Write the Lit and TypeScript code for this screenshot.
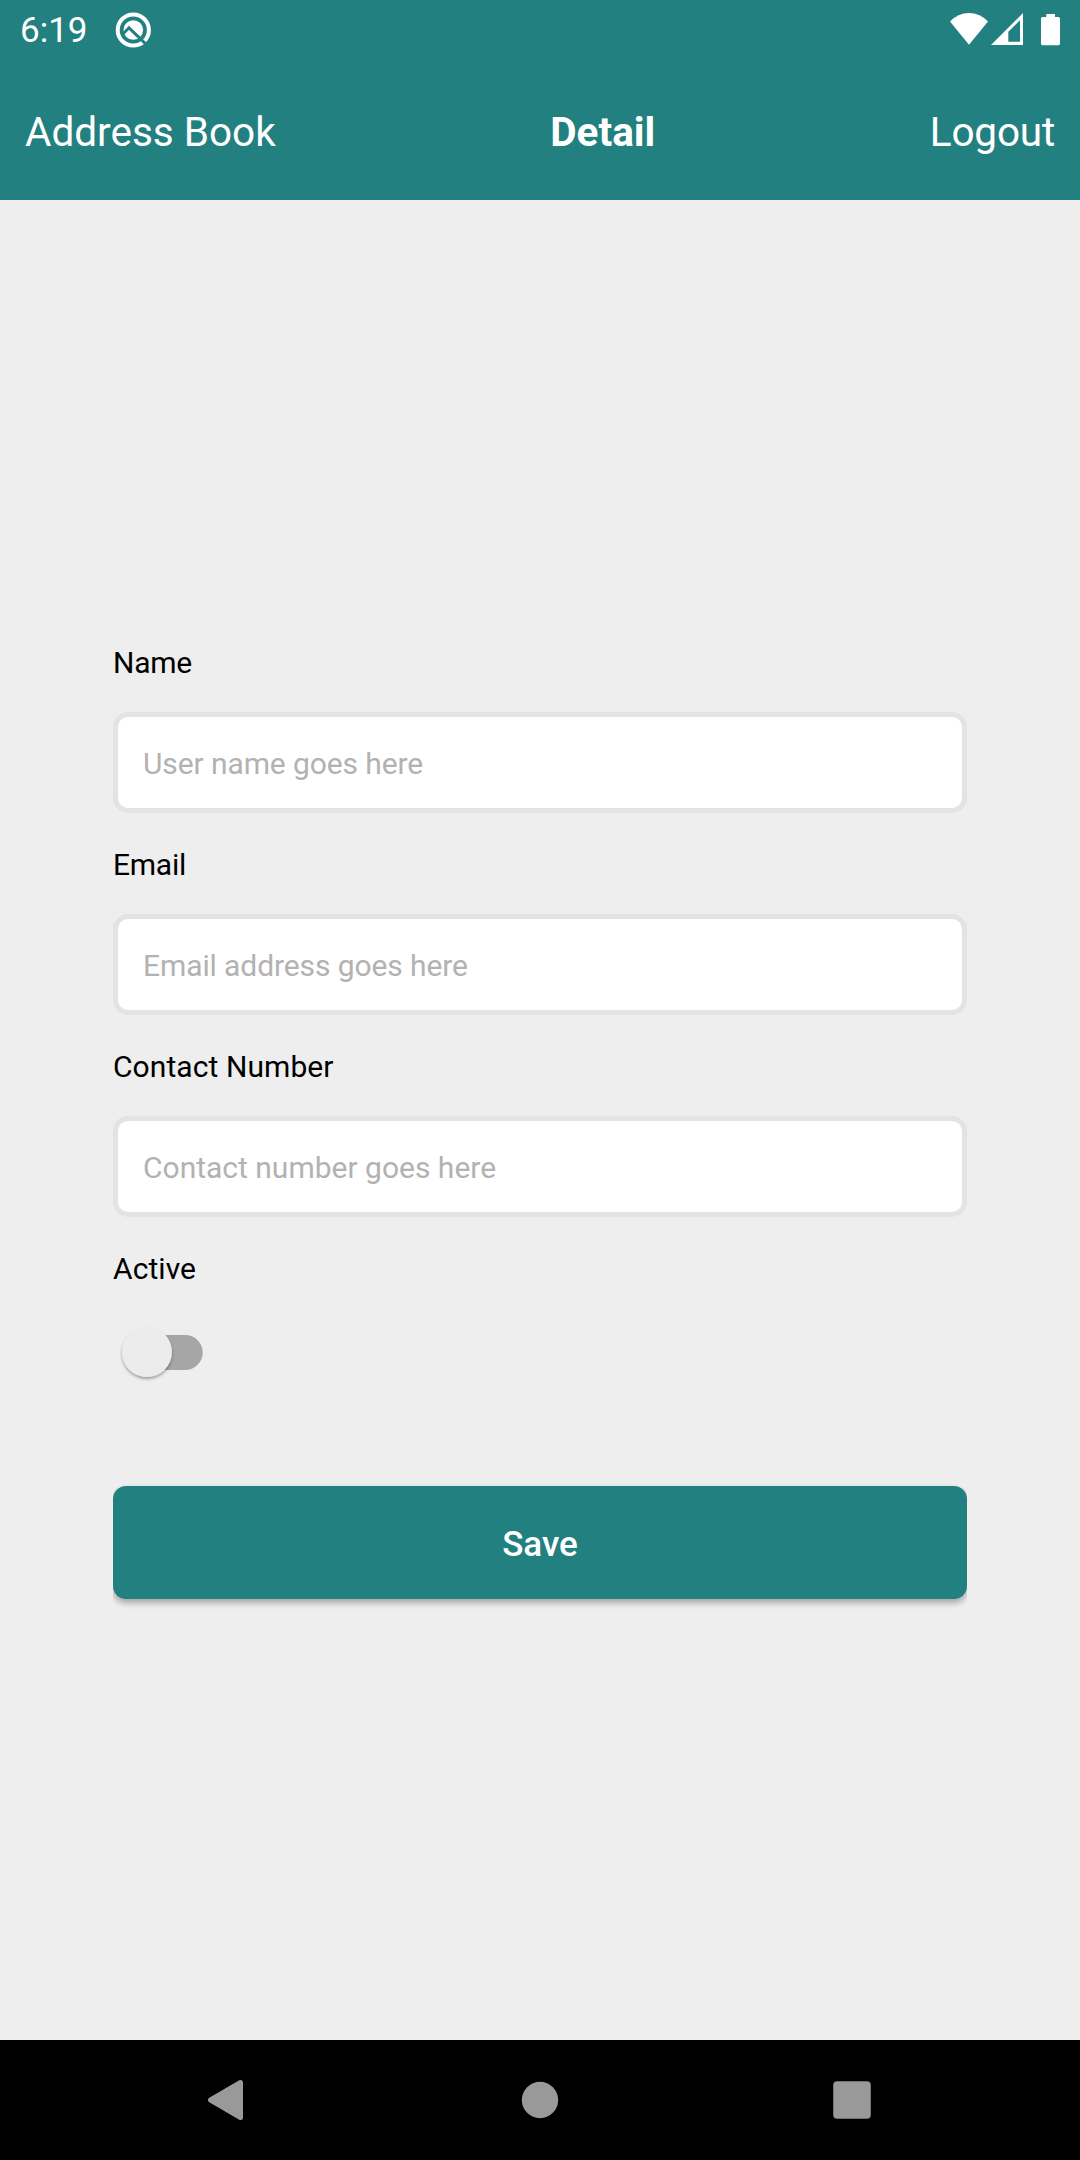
import { LitElement, html, css } from "lit";
import { customElement } from "lit/decorators.js";
import { classMap } from "lit/directives/class-map.js";

const FIELDS = [
  { label: "Name", hint: "User name goes here", tight: true },
  { label: "Email", hint: "Email address goes here", tight: true },
  { label: "Contact Number", hint: "Contact number goes here", tight: false },
];

@customElement("app-root")
export class AppRoot extends LitElement {
  static styles = css`
    :host { display: flex; flex-direction: column; width: 1080px; height: 2160px; background: #eee; font-family: Roboto, sans-serif; color: #000; overflow: hidden; }
    * { box-sizing: border-box; }
    svg { display: block; }
    .top { height: 200px; background: #238080; color: #fff; }
    .status { height: 63px; display: flex; justify-content: space-between; align-items: flex-start; padding: 0 20px; }
    .left { display: flex; align-items: flex-start; }
    .clock { font-size: 35px; line-height: 42px; padding-top: 10px; width: 93px; }
    .bar { height: 137px; display: flex; justify-content: space-between; align-items: center; padding: 0 25px; font-size: 40.5px; line-height: 48px; }
    .title { font-weight: 700; }
    .logout { letter-spacing: -0.2px; }
    .form { flex: 1; padding: 441px 113px 0; display: flex; flex-direction: column; }
    .field { height: 202px; display: flex; flex-direction: column; gap: 27px; }
    .label { font-size: 30px; line-height: 44px; letter-spacing: 0.08px; }
    .input { height: 101px; border: 5px solid #e3e3e3; border-radius: 15px; background: #fff; color: #b2b2b2; font-size: 30px; line-height: 93px; padding-left: 25px; }
    .tight .label { letter-spacing: -0.25px; }
    .tight .input { letter-spacing: -0.1px; }
    .switch { margin: 21px 0 94px; }
    .save { height: 113px; border-radius: 13px; background: #238080; color: #fff; font-size: 35px; font-weight: 500; line-height: 118px; text-align: center; box-shadow: 0 4px 6px rgba(0, 0, 0, .3); clip-path: inset(-4px 0 -14px 0); }
    .nav { height: 120px; background: #000; display: flex; justify-content: space-between; align-items: center; padding: 0 199px; }
  `;
  render() {
    return html`
      <header class="top">
        <div class="status">
          <div class="left">
            <span class="clock">6:19</span>
            <svg width="42" height="60" viewBox="113 0 42 60">
              <circle cx="133.3" cy="30" r="15.6" fill="none" stroke="#fff" stroke-width="4"/>
              <circle cx="133.3" cy="30" r="9.8" fill="#fff"/>
              <path d="M123.2 33.8L129 27.8L147 45.2" fill="none" stroke="#238080" stroke-width="3"/>
            </svg>
          </div>
          <svg width="120" height="60" viewBox="940 0 120 60" fill="#fff">
            <path d="M969 44.7L950 21.5Q958 13 969 13T988 21.5Z"/>
            <path fill-rule="evenodd" d="M991 45L1023 13V45ZM1008.3 31.8V41.7H1020V20.3Z"/>
            <path d="M1046.3 17V14H1055V17H1058.5Q1060 17 1060 18.5V43.5Q1060 45.3 1058.5 45.3H1042.5Q1041 45.3 1041 43.5V18.5Q1041 17 1042.5 17Z"/>
          </svg>
        </div>
        <div class="bar"><span>Address Book</span><span class="title">Detail</span><span class="logout">Logout</span></div>
      </header>
      <main class="form">
        ${FIELDS.map((f) => html`<div class=${classMap({ field: true, tight: f.tight })}><span class="label">${f.label}</span><div class="input">${f.hint}</div></div>`)}
        <span class="label">Active</span>
        <svg class="switch" width="130" height="80" viewBox="113 1312 130 80">
          <defs><filter id="lift" x="-30%" y="-30%" width="160%" height="160%"><feDropShadow dx="0" dy="2" stdDeviation="1.8" flood-color="#000" flood-opacity=".35"/></filter></defs>
          <rect x="132" y="1335" width="70.7" height="35" rx="17.5" fill="#a6a6a6"/>
          <circle cx="147" cy="1352" r="25" fill="#ececec" filter="url(#lift)"/>
        </svg>
        <div class="save">Save</div>
      </main>
      <nav class="nav">
        <svg width="52" height="52" viewBox="199 2074 52 52"><path d="M210.5 2100L240.5 2082.5V2117.5Z" fill="#999" stroke="#999" stroke-width="5" stroke-linejoin="round"/></svg>
        <svg width="52" height="52" viewBox="514 2074 52 52"><circle cx="540" cy="2100" r="18.2" fill="#999"/></svg>
        <svg width="52" height="52" viewBox="829 2074 52 52"><rect x="833.2" y="2081.2" width="37.6" height="37.6" rx="4" fill="#999"/></svg>
      </nav>`;
  }
}
